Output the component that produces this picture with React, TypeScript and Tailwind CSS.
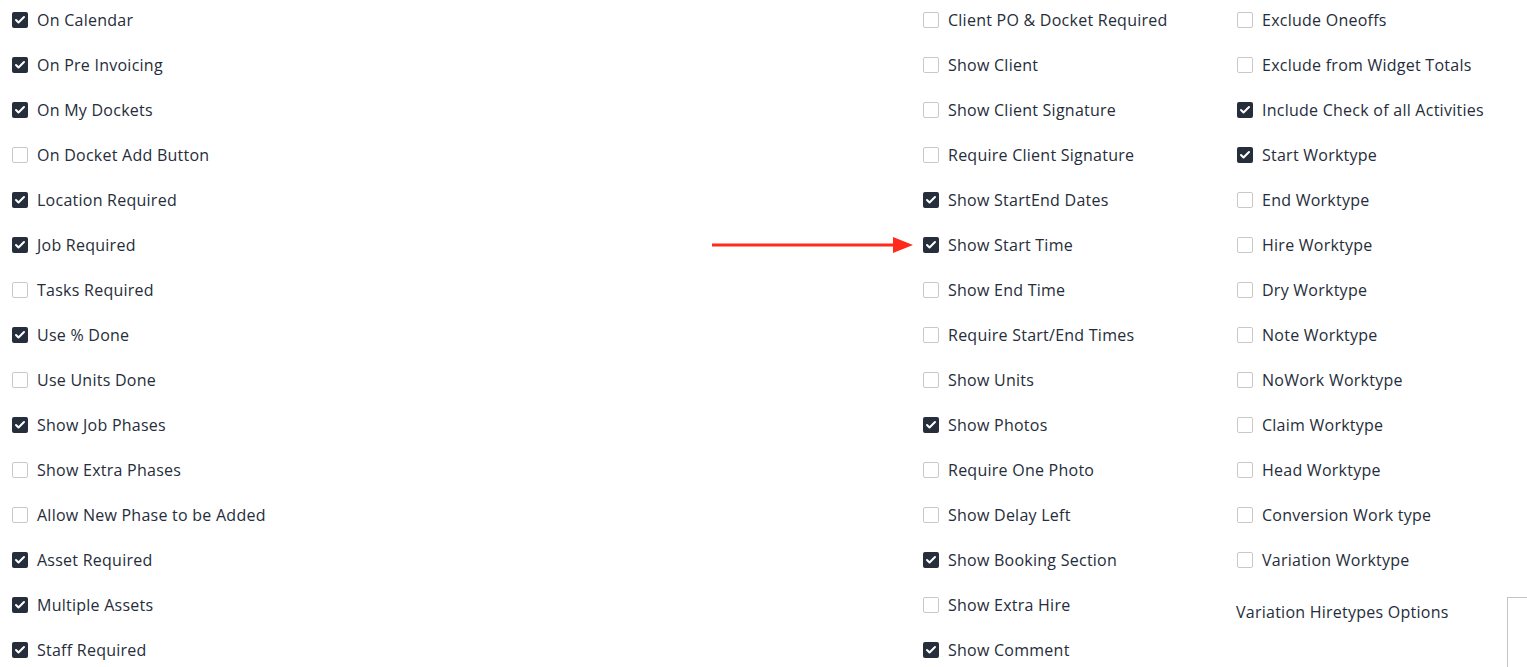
import { Check } from 'lucide-react';

type Item = { label: string; checked: boolean };

const col1: Item[] = [
  { label: 'On Calendar', checked: true },
  { label: 'On Pre Invoicing', checked: true },
  { label: 'On My Dockets', checked: true },
  { label: 'On Docket Add Button', checked: false },
  { label: 'Location Required', checked: true },
  { label: 'Job Required', checked: true },
  { label: 'Tasks Required', checked: false },
  { label: 'Use % Done', checked: true },
  { label: 'Use Units Done', checked: false },
  { label: 'Show Job Phases', checked: true },
  { label: 'Show Extra Phases', checked: false },
  { label: 'Allow New Phase to be Added', checked: false },
  { label: 'Asset Required', checked: true },
  { label: 'Multiple Assets', checked: true },
  { label: 'Staff Required', checked: true },
];

const col2: Item[] = [
  { label: 'Client PO & Docket Required', checked: false },
  { label: 'Show Client', checked: false },
  { label: 'Show Client Signature', checked: false },
  { label: 'Require Client Signature', checked: false },
  { label: 'Show StartEnd Dates', checked: true },
  { label: 'Show Start Time', checked: true },
  { label: 'Show End Time', checked: false },
  { label: 'Require Start/End Times', checked: false },
  { label: 'Show Units', checked: false },
  { label: 'Show Photos', checked: true },
  { label: 'Require One Photo', checked: false },
  { label: 'Show Delay Left', checked: false },
  { label: 'Show Booking Section', checked: true },
  { label: 'Show Extra Hire', checked: false },
  { label: 'Show Comment', checked: true },
];

const col3: Item[] = [
  { label: 'Exclude Oneoffs', checked: false },
  { label: 'Exclude from Widget Totals', checked: false },
  { label: 'Include Check of all Activities', checked: true },
  { label: 'Start Worktype', checked: true },
  { label: 'End Worktype', checked: false },
  { label: 'Hire Worktype', checked: false },
  { label: 'Dry Worktype', checked: false },
  { label: 'Note Worktype', checked: false },
  { label: 'NoWork Worktype', checked: false },
  { label: 'Claim Worktype', checked: false },
  { label: 'Head Worktype', checked: false },
  { label: 'Conversion Work type', checked: false },
  { label: 'Variation Worktype', checked: false },
];

function Row({ label, checked }: Item) {
  return (
    <label className="flex h-[45px] items-start gap-[9px] pt-3">
      {checked ? (
        <span className="flex h-4 w-4 shrink-0 items-center justify-center rounded-[2px] bg-[#272e3b]">
          <Check className="h-3 w-3 text-white" strokeWidth={4} />
        </span>
      ) : (
        <span className="h-4 w-4 shrink-0 rounded-[2px] border border-[#c9c9c9] bg-white" />
      )}
      <span className="text-[16px] leading-4 tracking-[0.25px] text-[#262d3a]">{label}</span>
    </label>
  );
}

export default function App() {
  return (
    <div
      className="relative h-[667px] w-[1527px] overflow-hidden bg-white"
      style={{ fontFamily: '"Open Sans", "Noto Sans", sans-serif' }}
    >
      <div className="flex pl-3">
        <div className="w-[911px] flex flex-col">
          {col1.map((i) => (
            <Row key={i.label} {...i} />
          ))}
        </div>
        <div className="w-[314px] flex flex-col">
          {col2.map((i) => (
            <Row key={i.label} {...i} />
          ))}
        </div>
        <div className="flex flex-1 flex-col">
          {col3.map((i) => (
            <Row key={i.label} {...i} />
          ))}
          <div className="mt-3 flex items-start">
            <span className="-ml-px w-[271px] pt-[7px] text-[16px] leading-4 tracking-[0.25px] text-[#262d3a]">
              Variation Hiretypes Options
            </span>
            <div className="h-[80px] flex-1 border-l border-t border-[#c4c4c4]" />
          </div>
        </div>
      </div>

      {/* red arrow */}
      <svg className="absolute left-[711px] top-[236px]" width="204" height="18" viewBox="0 0 204 18">
        <line x1="1" y1="9" x2="186" y2="9" stroke="#ff2a1a" strokeWidth="3" />
        <polygon points="182,1 202,9 182,17" fill="#ff2a1a" />
      </svg>
    </div>
  );
}
